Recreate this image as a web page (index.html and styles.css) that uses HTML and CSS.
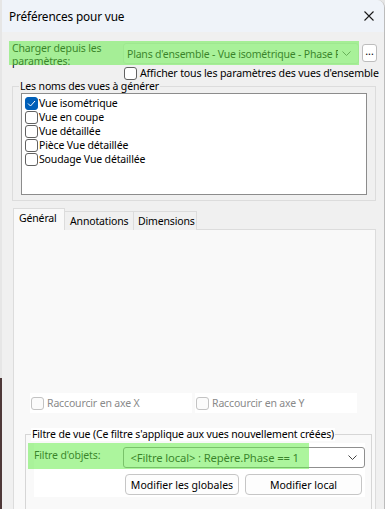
FILE: index.html
```html
<!DOCTYPE html>
<html lang="fr">
  <head>
    <meta charset="UTF-8" />
    <title>Préférences pour vue</title>
    <link rel="stylesheet" href="styles.css">
  </head>
  <body>
    <div class="window">
      <div class="titlebar">
        <span class="title">Préférences pour vue</span>
        <svg class="close" width="10" height="10" viewBox="0 0 10 10">
          <path d="M0.5 0.5 L9.5 9.5 M9.5 0.5 L0.5 9.5" stroke="#1a1a1a" stroke-width="1.1" fill="none" />
        </svg>
      </div>

      <div class="content">
        <div class="load-row">
          <div class="load-label">Charger depuis les<br />paramètres:</div>
          <div class="select load-select">
            <span class="select-text">Plans d'ensemble - Vue isométrique - Phase F</span>
            <svg class="chevron" width="9" height="5" viewBox="0 0 9 5"><path d="M0.5 0.5 L4.5 4.5 L8.5 0.5" stroke="#666" fill="none" /></svg>
          </div>
          <button class="more">...</button>
          <div class="highlight hl-load"></div>
        </div>

        <label class="show-all">
          <span class="check"></span>
          <span>Afficher tous les paramètres des vues d'ensemble</span>
        </label>

        <fieldset class="group views">
          <legend>Les noms des vues à générer</legend>
          <div class="list">
            <div class="item"><span class="check checked"><svg width="9" height="7" viewBox="0 0 9 7"><path d="M1 3.5 L3.5 6 L8 1" stroke="#fff" stroke-width="1" fill="none" /></svg></span>Vue isométrique</div>
            <div class="item"><span class="check"></span>Vue en coupe</div>
            <div class="item"><span class="check"></span>Vue détaillée</div>
            <div class="item"><span class="check"></span>Pièce Vue détaillée</div>
            <div class="item"><span class="check"></span>Soudage Vue détaillée</div>
          </div>
        </fieldset>

        <div class="tabs">
          <div class="tab active">Général</div>
          <div class="tab">Annotations</div>
          <div class="tab">Dimensions</div>
        </div>

        <div class="panel">
          <div class="shorten-row">
            <div class="shorten"><span class="check disabled"></span>Raccourcir en axe X</div>
            <div class="shorten"><span class="check disabled"></span>Raccourcir en axe Y</div>
          </div>

          <fieldset class="group filter">
            <legend>Filtre de vue (Ce filtre s'applique aux vues nouvellement créées)</legend>
            <div class="filter-body">
              <div class="filter-row">
                <div class="filter-label">Filtre d'objets:</div>
                <div class="select filter-select">
                  <span class="select-text">&lt;Filtre local&gt; : Repère.Phase == 1</span>
                  <svg class="chevron" width="9" height="5" viewBox="0 0 9 5"><path d="M0.5 0.5 L4.5 4.5 L8.5 0.5" stroke="#444" fill="none" /></svg>
                </div>
              </div>
              <div class="button-row">
                <button class="btn btn-global">Modifier les globales</button>
                <button class="btn btn-local">Modifier local</button>
              </div>
              <div class="highlight hl-filter"></div>
            </div>
          </fieldset>
        </div>
      </div>
    </div>
  </body>
</html>
```

FILE: styles.css
```css
html,
body {
  margin: 0;
  height: 100%;
  overflow: hidden;
}

body {
  background: linear-gradient(#e6e6e6 0 378px, #4e3838 378px);
  font-family: "Noto Sans", "Open Sans", sans-serif;
  font-size: 10.5px;
  letter-spacing: -0.15px;
  color: #000;
}

.window {
  margin-left: 2px;
  height: 100%;
  background: #f0f0f0;
  border-right: 1px solid #bcbcbc;
  border-top-right-radius: 8px;
  overflow: hidden;
}

.titlebar {
  height: 32px;
  background: #eff3f9;
  display: flex;
  align-items: center;
  justify-content: space-between;
  padding: 0 10px 0 7px;
  font-size: 11.8px;
}

.title {
  line-height: 14px;
}

.content {
  padding: 9px 0 0 7px;
}

/* load row */
.load-row {
  position: relative;
  display: flex;
  height: 24px;
}

.load-label {
  width: 111px;
  padding: 1px 0 0 3px;
  line-height: 13px;
  white-space: nowrap;
}

.select {
  display: flex;
  align-items: center;
  box-sizing: border-box;
  border: 1px solid #c9c9c9;
  border-radius: 3px;
  background: #fff;
  padding: 0 7px 0 5px;
  overflow: hidden;
}

.select-text {
  flex: 1;
  white-space: nowrap;
  overflow: hidden;
}

.load-select {
  width: 236px;
  height: 21px;
  margin-top: 2px;
  background: #f6f6f6;
  border-color: #e2e2e2;
  padding-left: 3px;
  letter-spacing: -0.2px;
}

.chevron {
  flex: none;
  margin-left: 4px;
}

.more {
  box-sizing: border-box;
  width: 15px;
  height: 18px;
  margin: 3px 0 0 3px;
  padding: 0 0 4px;
  border: 1px solid #bdbdbd;
  border-radius: 3px;
  background: #fff;
  font: inherit;
  line-height: 10px;
}

.highlight {
  position: absolute;
  background: rgba(104, 236, 76, 0.55);
  pointer-events: none;
}

.hl-load {
  left: 0;
  top: 0;
  width: 350px;
  height: 24px;
}

/* checkboxes */
.check {
  box-sizing: border-box;
  display: inline-flex;
  align-items: center;
  justify-content: center;
  flex: none;
  width: 13px;
  height: 13px;
  border: 1px solid #616161;
  border-radius: 3px;
  background: #fff;
  margin-right: 1px;
}

.check.checked {
  background: #005fb8;
  border-color: #005fb8;
}

.check.disabled {
  border-color: #c3c3c3;
  background: #fbfbfb;
}

.show-all {
  display: flex;
  align-items: center;
  gap: 2px;
  margin: 1px 0 0 115px;
  height: 14px;
  white-space: nowrap;
  font-size: 10.6px;
}

/* group boxes */
.group {
  margin: 0;
  padding: 0;
  border: 1px solid #dcdcdc;
  min-width: 0;
}

.group legend {
  padding: 0 1px;
  line-height: 13px;
}

.views {
  width: 364px;
  margin: 0 0 0 3px;
  padding: 0 0 5px 8px;
  box-sizing: border-box;
}

.views legend {
  margin-left: -2px;
}

.list {
  width: 346px;
  height: 102px;
  box-sizing: border-box;
  border: 1px solid #8c8c8c;
  background: #fff;
  padding: 2px 0 0 3px;
}

.item {
  display: flex;
  align-items: center;
  height: 14px;
  white-space: nowrap;
}

/* tabs */
.tabs {
  display: flex;
  align-items: flex-end;
  margin: 7px 0 0 4px;
  height: 22px;
  position: relative;
  z-index: 1;
}

.tab {
  box-sizing: border-box;
  height: 19px;
  padding: 0 5px;
  border: 1px solid #dcdcdc;
  border-bottom: none;
  border-left: none;
  background: #f0f0f0;
  line-height: 19px;
}

.tab.active {
  height: 22px;
  width: 52px;
  border-left: 1px solid #dcdcdc;
  background: #f9f9f9;
  line-height: 19px;
  padding-left: 5px;
}

.tab:nth-child(2) {
  width: 69px;
}

.tab:nth-child(3) {
  width: 63px;
  padding-left: 4px;
}

.panel {
  margin: -1px 0 0 4px;
  width: 363px;
  height: 400px;
  box-sizing: border-box;
  border: 1px solid #dcdcdc;
  background: #f9f9f9;
  padding: 163px 0 0 16px;
}

.shorten-row {
  display: flex;
  gap: 3px;
}

.shorten {
  display: flex;
  align-items: center;
  gap: 2px;
  width: 162px;
  height: 20px;
  padding-left: 1px;
  box-sizing: border-box;
  background: #fff;
  color: #8a8a8a;
  white-space: nowrap;
}

.filter {
  width: 347px;
  margin: 15px 0 0 -5px;
  padding: 0 5px 20px 8px;
  box-sizing: border-box;
  border-color: #d6d6d6;
}

.filter legend {
  margin-left: -3px;
  background: #fff;
  padding: 0 1px;
  white-space: nowrap;
}

.filter-body {
  position: relative;
  margin-top: 2px;
  width: 331px;
  height: 54px;
  background: #fff;
}

.filter-row {
  display: flex;
  height: 28px;
}

.filter-label {
  width: 90px;
  padding-top: 5px;
  line-height: 14px;
}

.filter-select {
  width: 243px;
  height: 21px;
  margin-top: 4px;
  border-color: #8f8f8f;
  padding-left: 6px;
  font-size: 11.3px;
}

.button-row {
  display: flex;
  gap: 6px;
  margin: 3px 0 0 91px;
}

.btn {
  box-sizing: border-box;
  height: 21px;
  border: 1px solid #c6c6c6;
  border-radius: 4px;
  background: #fdfdfd;
  font: inherit;
  padding: 0;
  line-height: 18px;
}

.btn-global {
  width: 114px;
}

.btn-local {
  width: 117px;
}

.hl-filter {
  left: -6px;
  top: 0;
  width: 281px;
  height: 26px;
}
```
